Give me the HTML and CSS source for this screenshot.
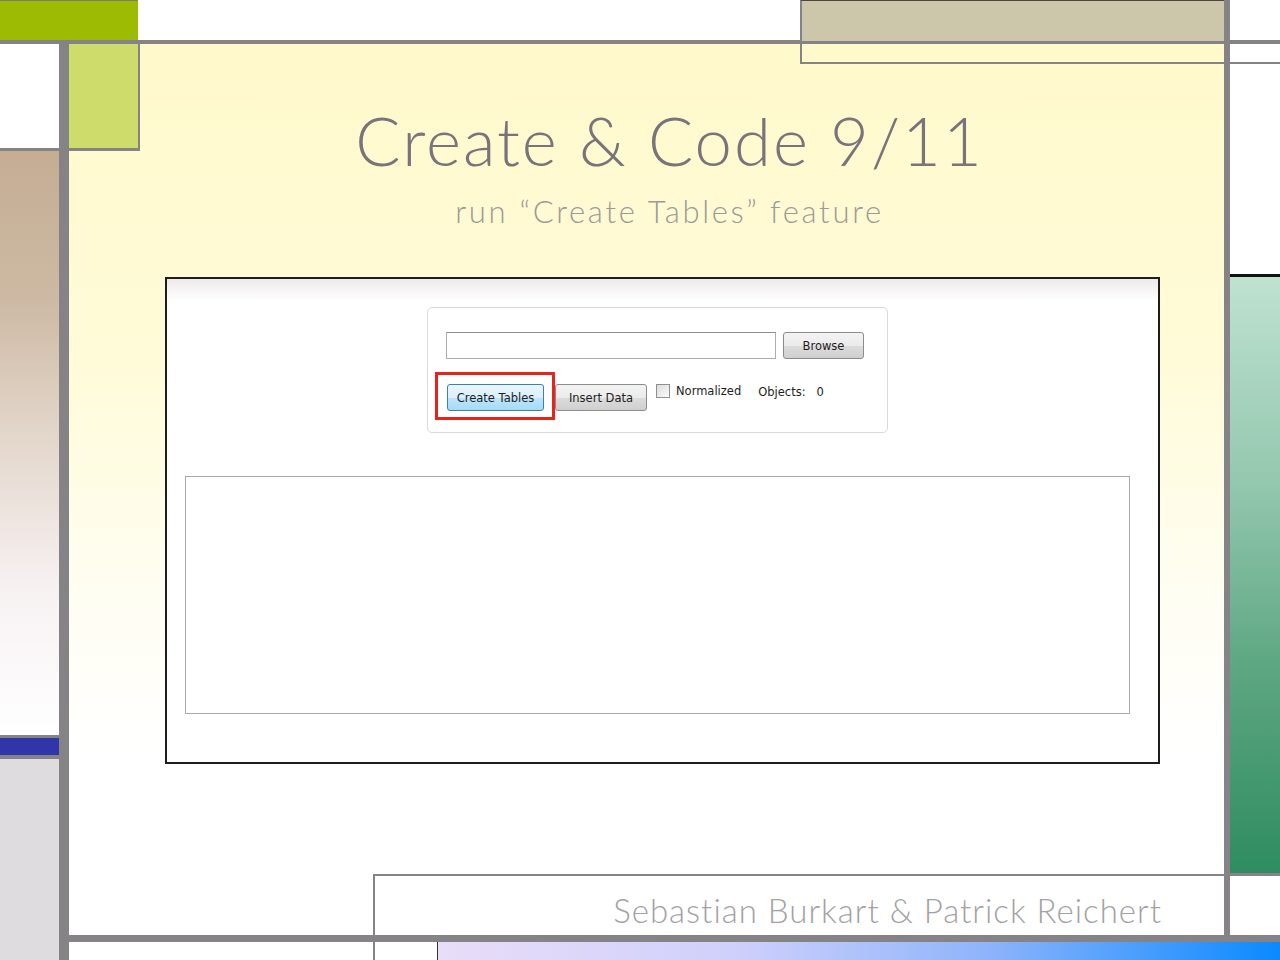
FILE: index.html
```html
<!DOCTYPE html>
<html lang="en">
<head>
    <meta charset="UTF-8">
    <title>Create &amp; Code 9/11</title>
    <link rel="stylesheet" href="styles.css">
</head>
<body>
    <div class="slide">
        <!-- frame blocks of the slide theme -->
        <div class="blk green-top"></div>
        <div class="blk line-top"></div>
        <div class="blk line-left"></div>
        <div class="blk green-light"></div>
        <div class="blk left-white"></div>
        <div class="blk left-tan"></div>
        <div class="blk left-blue"></div>
        <div class="blk left-grey"></div>
        <div class="blk tan-top"></div>
        <div class="blk tan-outline"></div>
        <div class="blk line-right"></div>
        <div class="blk right-thin"></div>
        <div class="blk right-mint"></div>
        <div class="blk right-low"></div>
        <div class="blk author-box">
            <span class="author">Sebastian Burkart &amp; Patrick Reichert</span>
        </div>
        <div class="blk line-bottom"></div>
        <div class="blk bottom-bar"></div>

        <div class="stage">
            <h1 class="title">Create &amp; Code 9/11</h1>
            <p class="subtitle">run “Create Tables” feature</p>

            <div class="shot">
                <div class="panel">
                    <div class="row">
                        <div class="textbox"></div>
                        <button class="btn browse">Browse</button>
                    </div>
                    <div class="row row-two">
                        <div class="marked">
                            <button class="btn btn-hot">Create Tables</button>
                            <span class="red-frame"></span>
                        </div>
                        <button class="btn insert">Insert Data</button>
                        <label class="check"><span class="box"></span>Normalized</label>
                        <span class="objects">Objects:&nbsp;&nbsp;&nbsp;0</span>
                    </div>
                </div>
                <div class="output"></div>
            </div>
        </div>
    </div>
</body>
</html>
```

FILE: styles.css
```css
html, body {
    margin: 0;
    background: #fff;
}
body { overflow: hidden; }

.slide {
    position: relative;
    width: 1280px;
    height: 960px;
    padding: 44px 56px 25px 69px;
    box-sizing: border-box;
}

.blk { position: absolute; z-index: 1; }

/* grey rules */
.line-top    { left: 0; top: 40px; width: 1280px; height: 4px; background: #868386; }
.line-left   { left: 59px; top: 40px; width: 10px; height: 920px; background: #868386; }
.line-right  { left: 1224px; top: 0; width: 6px; height: 935px; background: #868386; z-index: 3; }
.line-bottom { left: 59px; top: 935px; width: 1221px; height: 7px; background: #868386; z-index: 3; }

.green-top { left: 0; top: 0; width: 138px; height: 40px; background: #9dbb02; border-top: 1px solid #7d7d6a; box-sizing: border-box; }
.green-light {
    left: 69px; top: 44px; width: 69px; height: 104px;
    background: #cddc6a;
    border-right: 2px solid #868386;
    border-bottom: 3px solid #868386;
    z-index: 2;
}

.left-white { left: 0; top: 44px; width: 59px; height: 104px; background: #fff; border-bottom: 3px solid #868386; }
.left-tan {
    left: 0; top: 151px; width: 59px; height: 584px;
    background: linear-gradient(#c4ad93 0%, #cdb9a3 25%, #e4d8cd 50%, #f7f1f2 75%, #fff 100%);
    border-bottom: 3px solid #868386;
}
.left-blue { left: 0; top: 738px; width: 59px; height: 17px; background: #2f36a8; border-bottom: 4px solid #868386; }
.left-grey { left: 0; top: 759px; width: 59px; height: 201px; background: #dfdce0; }

.tan-top {
    left: 800px; top: 0; width: 422px; height: 40px;
    background: #ccc7aa;
    border-left: 2px solid #868386;
    border-top: 1px solid #4a4740;
}
.tan-outline {
    left: 800px; top: 44px; width: 422px; height: 18px;
    border-left: 2px solid #868386;
    border-bottom: 2px solid #868386;
    z-index: 2;
}
.right-thin { left: 1230px; top: 62px; width: 50px; height: 2px; background: #868386; }
.right-mint {
    left: 1230px; top: 274px; width: 50px; height: 596px;
    background: linear-gradient(#bfe2d1, #93c7ae 35%, #5ea783 65%, #2f8c61);
    border-top: 3px solid #111;
    border-bottom: 3px solid #868386;
}
.right-low { left: 1230px; top: 876px; width: 50px; height: 59px; background: #fff; }

.bottom-bar {
    left: 437px; top: 942px; width: 843px; height: 18px;
    background: linear-gradient(90deg, #e9ddf8, #cfd0fb 35%, #8fb4fb 65%, #0a89ff);
    border-left: 1px solid #333;
    z-index: 3;
}

.author-box {
    left: 373px; top: 874px; width: 851px; height: 86px;
    background: #fff;
    border-top: 2px solid #868386;
    border-left: 2px solid #868386;
    box-sizing: border-box;
    z-index: 2;
}
.author {
    position: absolute;
    right: 62px;
    top: 14px;
    font-family: Lato, "Liberation Sans", sans-serif;
    font-weight: 300;
    font-size: 33px;
    letter-spacing: 1px;
    color: #a3a1a3;
}

/* slide body */
.stage {
    height: 891px;
    padding-left: 46px;
    background: linear-gradient(#fff9cb 0%, #fffbd8 35%, #fffdf0 60%, #fff 80%);
    font-family: Lato, "Liberation Sans", sans-serif;
}
.title {
    margin: 0;
    padding-top: 56px;
    text-align: center;
    font-weight: 300;
    font-size: 67px;
    line-height: 80px;
    letter-spacing: 2px;
    color: #78747a;
}
.subtitle {
    margin: 11px 0 0;
    text-align: center;
    font-weight: 300;
    font-size: 31px;
    line-height: 40px;
    letter-spacing: 2.7px;
    color: #9c999b;
}

.shot {
    margin: 46px 0 0 50px;
    width: 995px;
    height: 487px;
    box-sizing: border-box;
    border: 2px solid #1d1d1d;
    background: linear-gradient(#efeaea, #fff 22px);
    padding: 28px 0 0 18px;
    font-family: "DejaVu Sans", sans-serif;
    font-size: 11.5px;
    color: #1e1e1e;
}

.panel {
    margin-left: 242px;
    width: 461px;
    height: 126px;
    box-sizing: border-box;
    border: 1px solid #d9d9d9;
    border-radius: 5px;
    background: #fff;
    padding: 24px 0 0 18px;
}
.row {
    display: flex;
    align-items: center;
    gap: 7px;
}
.row-two {
    margin-top: 25px;
    gap: 0;
    align-items: flex-start;
}

.textbox {
    width: 330px;
    height: 27px;
    box-sizing: border-box;
    border: 1px solid #abadb3;
    border-top-color: #8e8f8f;
    background: #fff;
}

.btn {
    height: 27px;
    box-sizing: border-box;
    border: 1px solid #8c8c8c;
    border-radius: 3px;
    background: linear-gradient(#f3f3f3, #ebebeb 50%, #dcdcdc 51%, #cfcfcf);
    font-family: "DejaVu Sans", sans-serif;
    font-size: 11.5px;
    color: #1e1e1e;
    padding: 0;
}
.browse { width: 81px; }
.insert { width: 92px; margin-left: 11px; }

.marked {
    position: relative;
    margin-left: 1px;
}
.btn-hot {
    width: 97px;
    border-color: #3c7fb1;
    background: linear-gradient(#eaf6fd, #d9f0fc 50%, #bee6fd 51%, #a7d9f5);
}
.red-frame {
    position: absolute;
    left: -12px;
    top: -12px;
    width: 120px;
    height: 48px;
    box-sizing: border-box;
    border: 3px solid #e8221d;
}

.check {
    display: flex;
    align-items: center;
    gap: 6px;
    margin-left: 9px;
}
.box {
    width: 14px;
    height: 14px;
    box-sizing: border-box;
    border: 1px solid #8f8f8f;
    background: linear-gradient(135deg, #dcdcdc, #fbfbfb);
}
.objects { margin-left: 17px; margin-top: 1px; }

.output {
    margin-top: 43px;
    width: 945px;
    height: 238px;
    box-sizing: border-box;
    border: 1px solid #a9a9a9;
    background: #fff;
}
```
